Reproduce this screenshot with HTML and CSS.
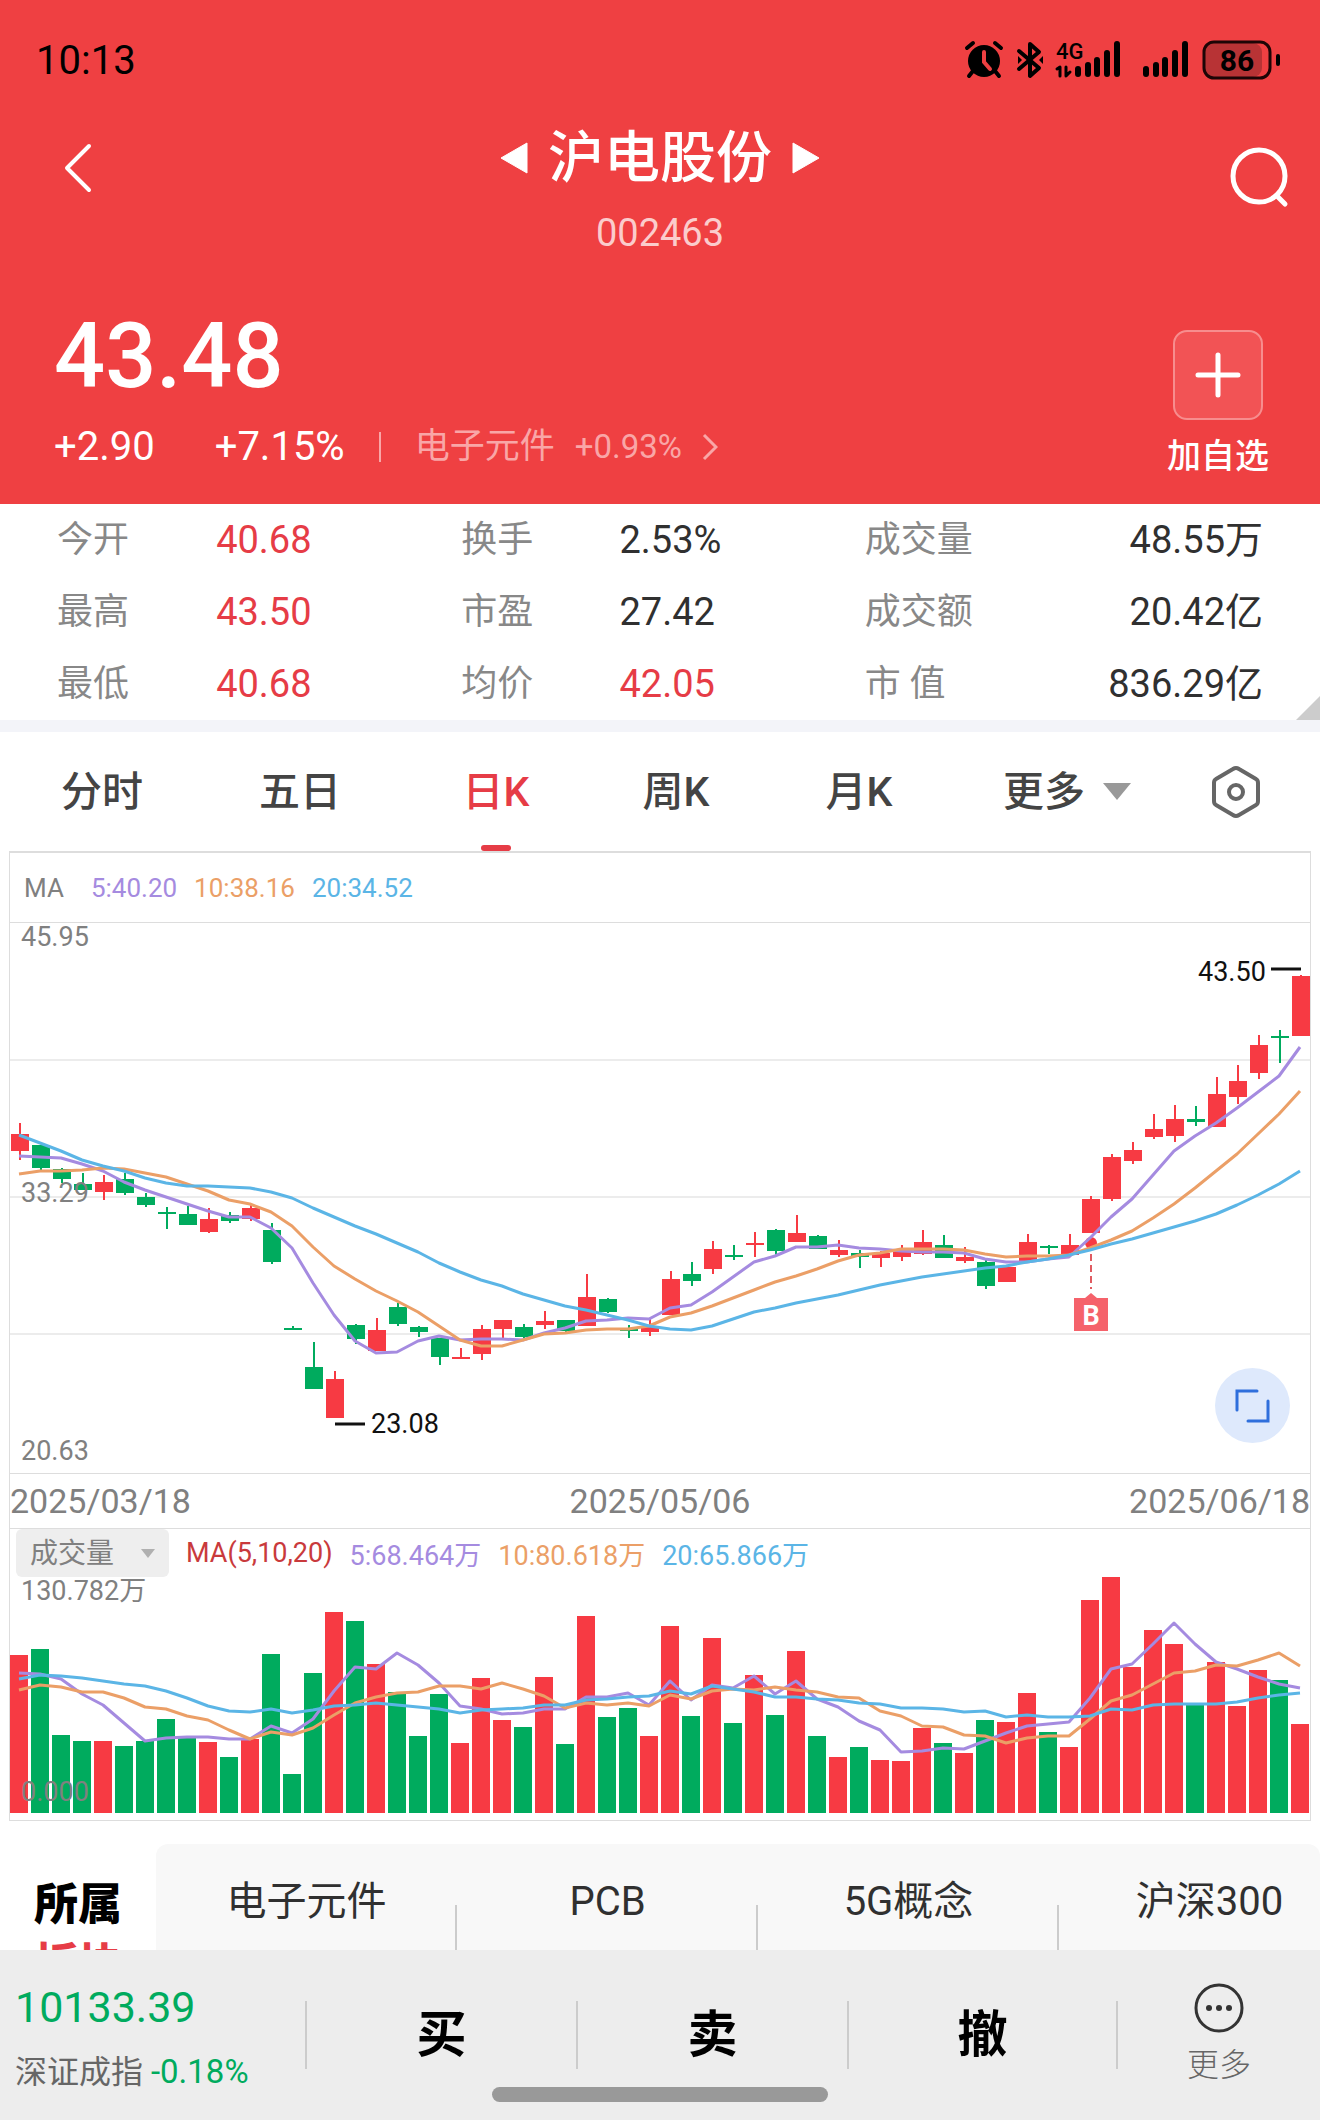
FILE: index.html
```html
<!DOCTYPE html>
<html lang="zh-CN">
<head>
    <meta charset="UTF-8">
    <meta name="viewport" content="width=device-width, initial-scale=1">
    <title>沪电股份 002463</title>
    <link rel="stylesheet" href="styles.css">
</head>
<body>
    <header class="header">
        <div class="status">
            <span>10:13</span>
            <svg class="status-icons" viewBox="0 0 316 40" width="316" height="40">
                <!-- alarm -->
                <circle cx="19" cy="21" r="16"/>
                <path class="line" d="M2 8L8 3M36 8L30 3M8 31L4 36M30 31L34 36" stroke-width="4"/>
                <path d="M19 12V22L25 29" fill="none" stroke="#ef4042" stroke-width="4" stroke-linecap="round"/>
                <!-- bluetooth -->
                <path class="line" d="M54 11L74 28L65 36V4L74 12L54 29" stroke-width="4"/>
                <path d="M53 16v8l4-4zM78 16v8l-4-4z"/>
                <!-- mobile signal -->
                <text x="91" y="19" font-size="22" font-weight="500">4G</text>
                <path class="line" d="M92 29L95 27V36M101 27V36L105 32" stroke-width="3"/>
                <path class="line" d="M113 29V34M123 25V34M132 20V34M142 13V34M152 4V34" stroke-width="6"/>
                <path class="line" d="M181 29V34M191 25V34M200 20V34M210 13V34M220 4V34" stroke-width="6"/>
                <!-- battery -->
                <rect x="240" y="3" width="57" height="34" rx="9" fill="#b83335"/>
                <rect x="239" y="2" width="66" height="36" rx="10" fill="none" stroke="#1d0506" stroke-width="3"/>
                <rect x="311" y="14" width="4" height="12" rx="2"/>
                <text x="272" y="31" font-size="30" font-weight="700" text-anchor="middle">86</text>
            </svg>
        </div>
        <nav class="nav">
            <button class="icon-btn back" aria-label="返回">
                <svg viewBox="0 0 30 50" width="30" height="50"><path d="M26 3L4 25L26 47" fill="none" stroke="#fff" stroke-width="4" stroke-linecap="round" stroke-linejoin="round"/></svg>
            </button>
            <div class="title">
                <div class="title-row">
                    <button class="icon-btn" aria-label="上一只">
                        <svg viewBox="0 0 28 32" width="28" height="32"><path d="M27 1V31L1 16Z" fill="#fff" stroke="#fff" stroke-linejoin="round"/></svg>
                    </button>
                    <h1>沪电股份</h1>
                    <button class="icon-btn" aria-label="下一只">
                        <svg viewBox="0 0 28 32" width="28" height="32"><path d="M1 1V31L27 16Z" fill="#fff" stroke="#fff" stroke-linejoin="round"/></svg>
                    </button>
                </div>
                <div class="code">002463</div>
            </div>
            <button class="icon-btn search" aria-label="搜索">
                <svg viewBox="0 0 60 62" width="60" height="62"><g fill="none" stroke="#fff" stroke-width="5" stroke-linecap="round"><circle cx="30" cy="30" r="26"/><path d="M49 51L56 58"/></g></svg>
            </button>
        </nav>
        <section class="quote">
            <div>
                <div class="price">43.48</div>
                <div class="change">
                    <span class="diff">+2.90</span>
                    <span class="percent">+7.15%</span>
                    <a href="#" class="industry">
                        <span>电子元件</span>
                        <span class="industry-change">+0.93%</span>
                        <svg viewBox="0 0 16 28" width="16" height="28"><path d="M2 2L14 14L2 26" fill="none" stroke="#f9a6a7" stroke-width="3"/></svg>
                    </a>
                </div>
            </div>
            <button class="add">
                <span class="add-box">
                    <svg viewBox="0 0 46 46" width="46" height="46"><path d="M23 3V43M3 23H43" stroke="#fff" stroke-width="5" stroke-linecap="round"/></svg>
                </span>
                加自选
            </button>
        </section>
    </header>

    <dl class="stats">
        <dt>今开</dt><dd class="up">40.68</dd>
        <dt>换手</dt><dd>2.53%</dd>
        <dt>成交量</dt><dd>48.55万</dd>
        <dt>最高</dt><dd class="up">43.50</dd>
        <dt>市盈</dt><dd>27.42</dd>
        <dt>成交额</dt><dd>20.42亿</dd>
        <dt>最低</dt><dd class="up">40.68</dd>
        <dt>均价</dt><dd class="up">42.05</dd>
        <dt>市 值</dt><dd>836.29亿</dd>
    </dl>

    <div class="tabs">
        <button>分时</button>
        <button>五日</button>
        <button class="active">日K</button>
        <button>周K</button>
        <button>月K</button>
        <button>更多<i class="caret"></i></button>
        <button class="settings" aria-label="设置">
            <svg viewBox="0 0 50 54" width="50" height="54"><g fill="none" stroke="#666" stroke-width="4" stroke-linejoin="round"><path d="M22 4Q25 2 28 4L45 14Q47 15 47 18V36Q47 39 45 40L28 50Q25 52 22 50L5 40Q3 39 3 36V18Q3 15 5 14Z"/><circle cx="25" cy="27" r="7"/></g></svg>
        </button>
    </div>

    <main class="chart">
        <div class="legend price-legend">
            <span class="ma">MA</span>
            <span class="ma5">5:40.20</span>
            <span class="ma10">10:38.16</span>
            <span class="ma20">20:34.52</span>
        </div>
        <div class="plot">
            <svg id="priceChart" viewBox="0 0 1300 550"></svg>
            <button class="expand" aria-label="全屏">
                <svg viewBox="0 0 75 75" width="75" height="75"><path d="M22 42V23H42M33 53H53V33" fill="none" stroke="#2f6fdc" stroke-width="3" stroke-linecap="round"/></svg>
            </button>
        </div>
        <div class="dates">
            <span>2025/03/18</span>
            <span>2025/05/06</span>
            <span>2025/06/18</span>
        </div>
        <div class="legend volume-legend">
            <label class="indicator">
                <select aria-label="指标">
                    <option>成交量</option>
                </select>
            </label>
            <span class="ma-title">MA(5,10,20)</span>
            <span class="ma5">5:68.464万</span>
            <span class="ma10">10:80.618万</span>
            <span class="ma20">20:65.866万</span>
        </div>
        <svg id="volumeChart" viewBox="0 48 1300 243"></svg>
    </main>

    <section class="sectors">
        <h2>所属<br><em>板块</em></h2>
        <div class="sector-list">
            <a href="#">电子元件</a>
            <a href="#">PCB</a>
            <a href="#">5G概念</a>
            <a href="#">沪深300</a>
        </div>
    </section>

    <footer class="bottom-bar">
        <div class="index">
            <strong>10133.39</strong>
            <span>深证成指 <b>-0.18%</b></span>
        </div>
        <button class="trade">买</button>
        <button class="trade">卖</button>
        <button class="trade">撤</button>
        <button class="more">
            <svg viewBox="0 0 52 52" width="52" height="52"><circle cx="26" cy="26" r="23" fill="none" stroke="#333" stroke-width="3"/><g fill="#333"><circle cx="16" cy="26" r="3"/><circle cx="26" cy="26" r="3"/><circle cx="36" cy="26" r="3"/></g></svg>
            更多
        </button>
        <div class="home-bar"></div>
    </footer>
    <script src="chart.js"></script>
</body>
</html>
```

FILE: styles.css
```css
:root {
    --header-red: #ef4042;
    --up: #f73a43;
    --up-text: #e63c46;
    --down: #00ab5e;
    --line: #dddddd;
    --gray: #808080;
    --ma5: #a58be0;
    --ma10: #eb9f67;
    --ma20: #5bb5e6;
}

* {
    box-sizing: border-box;
}

body {
    margin: 0;
    padding-bottom: 120px;
    background: #fff;
    color: #303030;
    font-family: Roboto, "Noto Sans CJK SC", sans-serif;
}

button {
    margin: 0;
    padding: 0;
    border: none;
    background: none;
    color: inherit;
    font: inherit;
    cursor: pointer;
}

a {
    color: inherit;
    text-decoration: none;
}

svg {
    display: block;
}

/* Header */
.header {
    background: var(--header-red);
    color: #fff;
    padding-bottom: 28px;
}

.status {
    display: flex;
    justify-content: space-between;
    align-items: center;
    height: 120px;
    padding: 0 39px 0 36px;
    color: #000;
    font-size: 40px;
}

.status-icons {
    overflow: visible;
}

.status-icons .line {
    fill: none;
    stroke: #000;
    stroke-linecap: round;
    stroke-linejoin: round;
}

.nav {
    display: grid;
    grid-template-columns: 1fr auto 1fr;
    align-items: start;
    padding: 2px 31px 0;
}

.back {
    justify-self: start;
    margin: 21px 0 0 32px;
}

.search {
    justify-self: end;
    margin-top: 24px;
}

.title {
    text-align: center;
}

.title-row {
    display: flex;
    align-items: center;
    gap: 20px;
}

.title h1 {
    margin: 0;
    font-size: 56px;
    font-weight: 500;
    line-height: 72px;
}

.code {
    margin-top: 18px;
    font-size: 38px;
    line-height: 42px;
    color: #fbcccc;
}

.quote {
    display: flex;
    justify-content: space-between;
    align-items: flex-start;
    padding: 51px 51px 0 54px;
}

.price {
    font-size: 90px;
    font-weight: 500;
    line-height: 104px;
}

.change {
    display: flex;
    align-items: center;
    margin-top: 16px;
    font-size: 40px;
    line-height: 44px;
}

.percent {
    margin-left: 60px;
}

.industry {
    display: flex;
    align-items: center;
    margin-left: 34px;
    color: #f9a6a7;
    font-size: 35px;
}

.industry::before {
    content: "";
    width: 2px;
    height: 30px;
    margin-right: 34px;
    background: #f9a6a7;
}

.industry-change {
    margin: 0 20px;
    font-size: 33px;
}

.add {
    display: flex;
    flex-direction: column;
    align-items: center;
    gap: 16px;
    margin-top: 25px;
    font-size: 34px;
    font-weight: 500;
    line-height: 40px;
}

.add-box {
    display: flex;
    align-items: center;
    justify-content: center;
    width: 90px;
    height: 90px;
    border: 2px solid #f78d8e;
    border-radius: 14px;
    background: #f25355;
}

/* Key figures */
.stats {
    position: relative;
    display: grid;
    grid-template-columns: 159fr 245fr 158fr 245fr 120fr 278fr;
    margin: 0;
    padding: 0 57px;
    border-bottom: 12px solid #f3f4f9;
    font-size: 36px;
    line-height: 72px;
}

.stats::after {
    content: "";
    position: absolute;
    right: 0;
    bottom: 0;
    border: 12px solid #ccc;
    border-top-color: transparent;
    border-left-color: transparent;
}

.stats dt {
    color: #888;
    white-space: nowrap;
}

.stats dd {
    margin: 0;
    font-size: 38px;
}

.stats dd:nth-of-type(3n) {
    text-align: right;
}

.stats .up {
    color: var(--up-text);
}

/* Period tabs */
.tabs {
    display: grid;
    grid-template-columns: 204fr 192fr 200fr 160fr 206fr 210fr 128fr;
    height: 119px;
    padding-right: 20px;
}

.tabs button {
    position: relative;
    display: flex;
    align-items: center;
    justify-content: center;
    padding-bottom: 8px;
    color: #444;
    font-size: 41px;
    font-weight: 500;
}

.tabs .settings {
    padding: 0;
}

.tabs .active {
    color: var(--up-text);
}

.tabs .active::after {
    content: "";
    position: absolute;
    bottom: 0;
    width: 30px;
    height: 6px;
    border-radius: 3px;
    background: var(--up-text);
}

.caret {
    margin: 8px 0 0 18px;
    border: 14px solid transparent;
    border-top: 17px solid #999;
    border-bottom: none;
}

/* Charts */
.chart {
    margin: 0 9px;
    border: 1px solid var(--line);
    border-top-width: 2px;
}

.chart > svg, .plot > svg {
    width: 100%;
    height: auto;
}

.legend {
    display: flex;
    align-items: center;
    gap: 17px;
    font-size: 27px;
}

.price-legend {
    height: 70px;
    padding-left: 14px;
    border-bottom: 1px solid var(--line);
    font-size: 26px;
}

.ma {
    margin-right: 10px;
    color: var(--gray);
}

.ma5 { color: var(--ma5); }
.ma10 { color: var(--ma10); }
.ma20 { color: var(--ma20); }

.plot {
    position: relative;
}

.expand {
    position: absolute;
    right: 20px;
    bottom: 30px;
    border-radius: 50%;
    background: #dee9fc;
}

.dates {
    display: flex;
    justify-content: space-between;
    border-top: 1px solid var(--line);
    border-bottom: 1px solid var(--line);
    color: var(--gray);
    font-size: 34px;
    line-height: 54px;
}

.volume-legend {
    height: 48px;
    padding-left: 6px;
}

.indicator {
    position: relative;
    height: 48px;
}

.indicator::after {
    content: "";
    position: absolute;
    top: 20px;
    right: 14px;
    border: 7px solid transparent;
    border-top: 9px solid #b0b0b0;
    border-bottom: none;
    pointer-events: none;
}

.indicator select {
    appearance: none;
    width: 153px;
    height: 48px;
    padding: 0 0 0 14px;
    border: none;
    border-radius: 6px;
    background: #eee;
    color: var(--gray);
    font: inherit;
    font-size: 28px;
}

.ma-title {
    color: #c93a3c;
}

.grid { stroke: #ececec; stroke-width: 2; }
.axis { fill: var(--gray); font-size: 27px; }
.mark { fill: #111; font-size: 27px; }
.mark-line { stroke: #111; stroke-width: 3; }
.up-shape { fill: var(--up); }
.down-shape { fill: var(--down); }

.average {
    fill: none;
    stroke-width: 3;
    stroke-linejoin: round;
}

.line5 { stroke: var(--ma5); }
.line10 { stroke: var(--ma10); }
.line20 { stroke: var(--ma20); }

.buy-line {
    stroke: #e05b61;
    stroke-width: 2;
    stroke-dasharray: 7 4;
}

.buy-flag { fill: #f5626b; }

.buy-text {
    fill: #fff;
    font-size: 27px;
    font-weight: 700;
    text-anchor: middle;
}

/* Sectors */
.sectors {
    display: flex;
    height: 154px;
    margin-top: 23px;
    overflow: hidden;
}

.sectors h2 {
    flex: none;
    width: 156px;
    margin: 0;
    padding-top: 31px;
    color: #000;
    font-size: 44px;
    font-weight: 900;
    line-height: 60px;
    text-align: center;
}

.sectors em {
    color: var(--up-text);
    font-style: normal;
}

.sector-list {
    display: flex;
    flex: 1;
    min-width: 0;
    overflow: hidden;
    border-radius: 12px 12px 0 0;
    background: #f8f8f8;
}

.sector-list a {
    position: relative;
    flex: 0 0 301px;
    font-size: 40px;
    line-height: 116px;
    text-align: center;
}

.sector-list a::after {
    content: "";
    position: absolute;
    top: 61px;
    right: 0;
    width: 2px;
    height: 90px;
    background: #ccc;
}

/* Bottom bar */
.bottom-bar {
    position: fixed;
    left: 0;
    right: 0;
    bottom: 0;
    display: grid;
    grid-template-columns: 305fr 271fr 271fr 271fr 202fr;
    align-items: start;
    height: 170px;
    background: #ededed;
}

.index {
    padding: 32px 0 0 15px;
    color: #666;
    font-size: 32px;
    white-space: nowrap;
}

.index strong {
    display: block;
    color: var(--down);
    font-size: 43px;
    font-weight: 400;
    line-height: 50px;
}

.index span {
    display: block;
    margin-top: 16px;
    line-height: 48px;
}

.index b {
    color: var(--down);
    font-size: 33px;
    font-weight: 400;
}

.trade {
    height: 68px;
    margin-top: 51px;
    border-left: 2px solid #ccc;
    color: #000;
    font-size: 50px;
    font-weight: 700;
    line-height: 68px;
}

.trade:nth-of-type(3) {
    border-right: 2px solid #ccc;
}

.more {
    display: flex;
    flex-direction: column;
    align-items: center;
    gap: 11px;
    margin-top: 32px;
    color: #666;
    font-size: 32px;
    font-weight: 300;
    line-height: 40px;
}

.home-bar {
    position: absolute;
    left: 50%;
    bottom: 18px;
    width: 336px;
    height: 15px;
    margin-left: -168px;
    border-radius: 8px;
    background: #999;
}
```

FILE: chart.js
```js
const STEP = 21;

// [direction, high, body top, body bottom, low], in plot units
const candles = [
    ['r', 200, 211, 228, 237], ['g', 222, 222, 245, 248], ['g', 245, 246, 256, 260], ['g', 250, 261, 267, 267],
    ['r', 252, 259, 269, 277], ['g', 250, 256, 270, 272], ['g', 270, 274, 282, 284], ['g', 284, 289, 291, 306],
    ['g', 283, 291, 302, 302], ['r', 285, 296, 309, 310], ['g', 289, 292, 298, 300], ['r', 282, 285, 296, 298],
    ['g', 300, 307, 339, 341], ['g', 403, 405, 407, 407], ['g', 419, 444, 466, 466], ['r', 448, 456, 495, 495],
    ['g', 401, 402, 416, 421], ['r', 395, 407, 428, 428], ['g', 380, 384, 401, 403], ['g', 403, 404, 409, 414],
    ['g', 415, 415, 434, 442], ['r', 425, 434, 436, 436], ['r', 402, 406, 431, 437], ['r', 397, 397, 406, 415],
    ['g', 401, 404, 414, 415], ['r', 388, 398, 402, 406], ['g', 397, 397, 408, 410], ['r', 351, 374, 403, 403],
    ['g', 375, 376, 389, 390], ['g', 402, 406, 408, 415], ['r', 396, 403, 409, 413], ['r', 348, 356, 392, 392],
    ['g', 339, 351, 358, 363], ['r', 318, 326, 346, 351], ['g', 322, 332, 334, 337], ['r', 309, 320, 322, 334],
    ['g', 306, 307, 328, 332], ['r', 292, 310, 319, 319], ['g', 312, 313, 326, 326], ['r', 317, 327, 332, 334],
    ['g', 327, 330, 334, 345], ['r', 328, 330, 335, 344], ['r', 322, 329, 334, 338], ['r', 307, 319, 331, 332],
    ['g', 312, 322, 335, 335], ['r', 324, 334, 338, 340], ['g', 337, 339, 363, 366], ['r', 343, 344, 359, 359],
    ['r', 311, 319, 338, 338], ['g', 322, 323, 325, 331], ['r', 311, 322, 332, 332], ['r', 273, 276, 310, 310],
    ['r', 231, 234, 276, 278], ['r', 219, 227, 238, 241], ['r', 191, 206, 214, 216], ['r', 182, 196, 213, 219],
    ['g', 183, 196, 199, 203], ['r', 154, 171, 204, 204], ['r', 142, 158, 174, 181], ['r', 112, 122, 150, 156],
    ['g', 107, 113, 115, 140], ['r', 52, 53, 113, 113]
];

const priceAverages = {
    5: [233, 234, 235, 241, 248, 259, 267, 274, 281, 288, 294, 294, 305, 325, 360, 392, 418, 430, 429, 418, 413,
        417, 416, 416, 417, 410, 405, 398, 397, 395, 396, 385, 382, 369, 354, 339, 333, 324, 324, 322, 325, 326,
        328, 329, 329, 330, 336, 339, 339, 336, 334, 315, 294, 276, 252, 228, 213, 200, 185, 169, 153, 124],
    10: [251, 248, 248, 247, 245, 246, 250, 254, 261, 268, 277, 281, 289, 303, 324, 343, 356, 368, 378, 389, 403,
        417, 423, 423, 417, 411, 410, 407, 406, 406, 403, 394, 390, 383, 375, 367, 359, 353, 346, 338, 332, 330,
        326, 326, 326, 327, 331, 334, 333, 333, 332, 325, 317, 308, 295, 281, 265, 248, 231, 211, 191, 168],
    20: [212, 220, 228, 237, 243, 248, 255, 260, 263, 263, 264, 265, 269, 275, 285, 294, 303, 311, 320, 329, 340,
        349, 357, 363, 371, 377, 383, 387, 392, 397, 403, 406, 407, 403, 396, 389, 385, 380, 376, 372, 367, 362,
        358, 354, 351, 348, 345, 343, 339, 336, 332, 327, 321, 316, 310, 304, 298, 291, 282, 272, 261, 248]
};

const VOLUME_BASE = 284;

const volumes = [
    126, 120, 206, 212, 212, 217, 212, 190, 208, 213, 228, 210, 125, 245, 144, 83, 92, 135, 163, 207, 165,
    214, 149, 191, 198, 148, 215, 87, 188, 179, 207, 97, 187, 109, 194, 146, 186, 122, 207, 228, 218, 231,
    232, 199, 214, 224, 191, 193, 164, 203, 218, 71, 46, 138, 101, 115, 176, 133, 177, 141, 151, 195
];

const volumeAverages = {
    5: [144, 145, 150, 165, 176, 194, 212, 209, 208, 208, 210, 210, 197, 204, 190, 162, 138, 140, 124, 136, 154,
        177, 180, 185, 184, 180, 180, 168, 168, 164, 176, 152, 171, 156, 159, 147, 165, 152, 170, 178, 192, 201,
        223, 222, 219, 220, 212, 204, 197, 195, 193, 169, 140, 135, 115, 94, 115, 133, 140, 148, 155, 159],
    10: [161, 156, 158, 163, 163, 169, 178, 180, 187, 191, 201, 210, 203, 206, 199, 186, 174, 168, 164, 163, 157,
        157, 160, 154, 160, 167, 179, 174, 176, 174, 177, 166, 170, 162, 160, 161, 158, 161, 163, 168, 169, 182,
        187, 197, 198, 206, 207, 214, 209, 207, 207, 190, 172, 166, 155, 144, 142, 136, 137, 131, 124, 137],
    20: [150, 146, 147, 149, 152, 155, 157, 162, 169, 177, 182, 183, 180, 184, 181, 177, 176, 174, 176, 178, 180,
        184, 181, 180, 179, 176, 176, 171, 170, 168, 167, 162, 165, 157, 160, 163, 168, 168, 170, 171, 174, 175,
        179, 179, 180, 183, 182, 188, 186, 188, 188, 187, 180, 181, 176, 175, 175, 175, 173, 169, 166, 164]
};

function rect(dir, x, y, width, height) {
    const cls = dir === 'r' ? 'up-shape' : 'down-shape';
    return `<rect class="${cls}" x="${x}" y="${y}" width="${width}" height="${height}"/>`;
}

function averages(series) {
    return [5, 10, 20].map(n => {
        const points = series[n].map((y, i) => `${9 + STEP * i},${y}`).join(' ');
        return `<polyline class="average line${n}" points="${points}"/>`;
    }).join('');
}

function drawPrice() {
    let out = '';
    [137, 274, 411].forEach(y => {
        out += `<line class="grid" x1="0" x2="1300" y1="${y}" y2="${y}"/>`;
    });
    candles.forEach(([dir, high, top, bottom, low], i) => {
        out += rect(dir, 9 + STEP * i, high, 2, low - high);
        out += rect(dir, 1 + STEP * i, top, 18, bottom - top);
    });
    // buy marker
    out += '<circle class="up-shape" cx="1081" cy="320" r="6"/>';
    out += averages(priceAverages);
    out += '<line class="buy-line" x1="1081" x2="1081" y1="331" y2="366"/>';
    out += '<path class="buy-flag" d="M1064 375H1075L1081 370L1087 375H1098V408H1064Z"/>';
    out += '<text class="buy-text" x="1081" y="402">B</text>';
    // scale
    out += '<text class="axis" x="11" y="23">45.95</text>';
    out += '<text class="axis" x="11" y="279">33.29</text>';
    out += '<text class="axis" x="11" y="537">20.63</text>';
    // highest and lowest
    out += '<line class="mark-line" x1="1261" x2="1291" y1="46" y2="46"/>';
    out += '<text class="mark" x="1188" y="58">43.50</text>';
    out += '<line class="mark-line" x1="325" x2="355" y1="501" y2="501"/>';
    out += '<text class="mark" x="361" y="510">23.08</text>';
    document.getElementById('priceChart').innerHTML = out;
}

function drawVolume() {
    let out = '';
    volumes.forEach((top, i) => {
        out += rect(candles[i][0], STEP * i, top, 18, VOLUME_BASE - top);
    });
    out += averages(volumeAverages);
    out += '<text class="axis" x="11" y="71">130.782万</text>';
    out += '<text class="axis" x="11" y="272">0.000</text>';
    document.getElementById('volumeChart').innerHTML = out;
}

drawPrice();
drawVolume();
```
